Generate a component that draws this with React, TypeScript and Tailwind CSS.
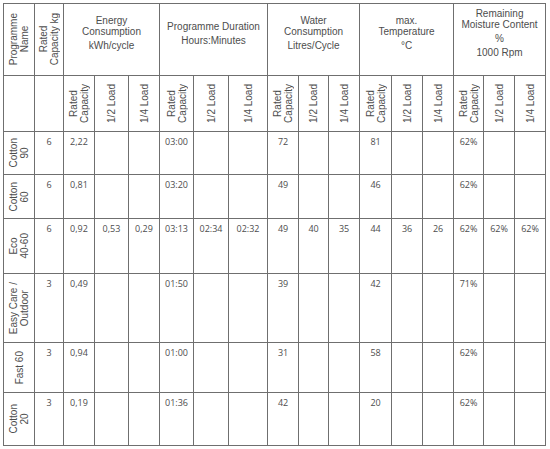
const cols = [31, 29, 31, 34, 31, 34, 35, 39, 31, 30, 31, 32, 31, 31, 30, 31, 31];

type Row = { name: string[]; kg: string; h: number; vals: string[] };

const rows: Row[] = [
  { name: ["Cotton", "90"], kg: "6", h: 43, vals: ["2,22", "", "", "03:00", "", "", "72", "", "", "81", "", "", "62%", "", ""] },
  { name: ["Cotton", "60"], kg: "6", h: 44, vals: ["0,81", "", "", "03:20", "", "", "49", "", "", "46", "", "", "62%", "", ""] },
  { name: ["Eco", "40-60"], kg: "6", h: 55, vals: ["0,92", "0,53", "0,29", "03:13", "02:34", "02:32", "49", "40", "35", "44", "36", "26", "62%", "62%", "62%"] },
  { name: ["Easy Care /", "Outdoor"], kg: "3", h: 69, vals: ["0,49", "", "", "01:50", "", "", "39", "", "", "42", "", "", "71%", "", ""] },
  { name: ["Fast 60"], kg: "3", h: 50, vals: ["0,94", "", "", "01:00", "", "", "31", "", "", "58", "", "", "62%", "", ""] },
  { name: ["Cotton", "20"], kg: "3", h: 53, vals: ["0,19", "", "", "01:36", "", "", "42", "", "", "20", "", "", "62%", "", ""] },
];

const groups: string[][][] = [
  [["Energy", "Consumption"], ["kWh/cycle"]],
  [["Programme Duration"], ["Hours:Minutes"]],
  [["Water", "Consumption"], ["Litres/Cycle"]],
  [["max.", "Temperature"], ["°C"]],
  [["Remaining", "Moisture Content"], ["%"], ["1000 Rpm"]],
];

const sub = [["Rated", "Capacity"], ["1/2 Load"], ["1/4 Load"]];

const cell = "border border-[#6f6f6f] p-0";
const dataCell = `${cell} align-top text-center pt-[3px] leading-[14px] text-[9px] font-['Open_Sans',sans-serif]`;

function Vert({ lines }: { lines: string[] }) {
  return (
    <div className="flex items-center justify-center">
      <div className="[writing-mode:vertical-rl] rotate-180 text-center leading-[11px]">
        {lines.map((l, i) => (
          <div key={i} className="whitespace-nowrap">
            {l}
          </div>
        ))}
      </div>
    </div>
  );
}

export default function App() {
  return (
    <div className="w-[550px] h-[449px] bg-white pl-[3px] pt-[3px]">
      <table className="table-fixed border-collapse w-[542px] text-[#4d4d4d] text-[10px] font-['Liberation_Sans',Arial,sans-serif]">
        <colgroup>
          {cols.map((w, i) => (
            <col key={i} style={{ width: w }} />
          ))}
        </colgroup>
        <tbody>
          <tr className="h-[72px]">
            <td className={cell}>
              <Vert lines={["Programme", "Name"]} />
            </td>
            <td className={cell}>
              <Vert lines={["Rated", "Capacity kg"]} />
            </td>
            {groups.map((g, i) => (
              <td key={i} colSpan={3} className={`${cell} align-middle`}>
                <div className="flex flex-col items-center gap-[3px] pb-[13px] text-center leading-[11px]">
                  {g.map((p, j) => (
                    <div key={j}>
                      {p.map((l, k) => (
                        <div key={k} className="whitespace-nowrap">
                          {l}
                        </div>
                      ))}
                    </div>
                  ))}
                </div>
              </td>
            ))}
          </tr>
          <tr className="h-[56px]">
            <td className={cell}></td>
            <td className={cell}></td>
            {groups.flatMap((_, i) =>
              sub.map((s, j) => (
                <td key={`${i}-${j}`} className={cell}>
                  <Vert lines={s} />
                </td>
              ))
            )}
          </tr>
          {rows.map((r, i) => (
            <tr key={i} style={{ height: r.h }}>
              <td className={`${cell} align-middle`}>
                <Vert lines={r.name} />
              </td>
              <td className={dataCell}>{r.kg}</td>
              {r.vals.map((v, j) => (
                <td key={j} className={dataCell}>
                  {v}
                </td>
              ))}
            </tr>
          ))}
        </tbody>
      </table>
    </div>
  );
}
